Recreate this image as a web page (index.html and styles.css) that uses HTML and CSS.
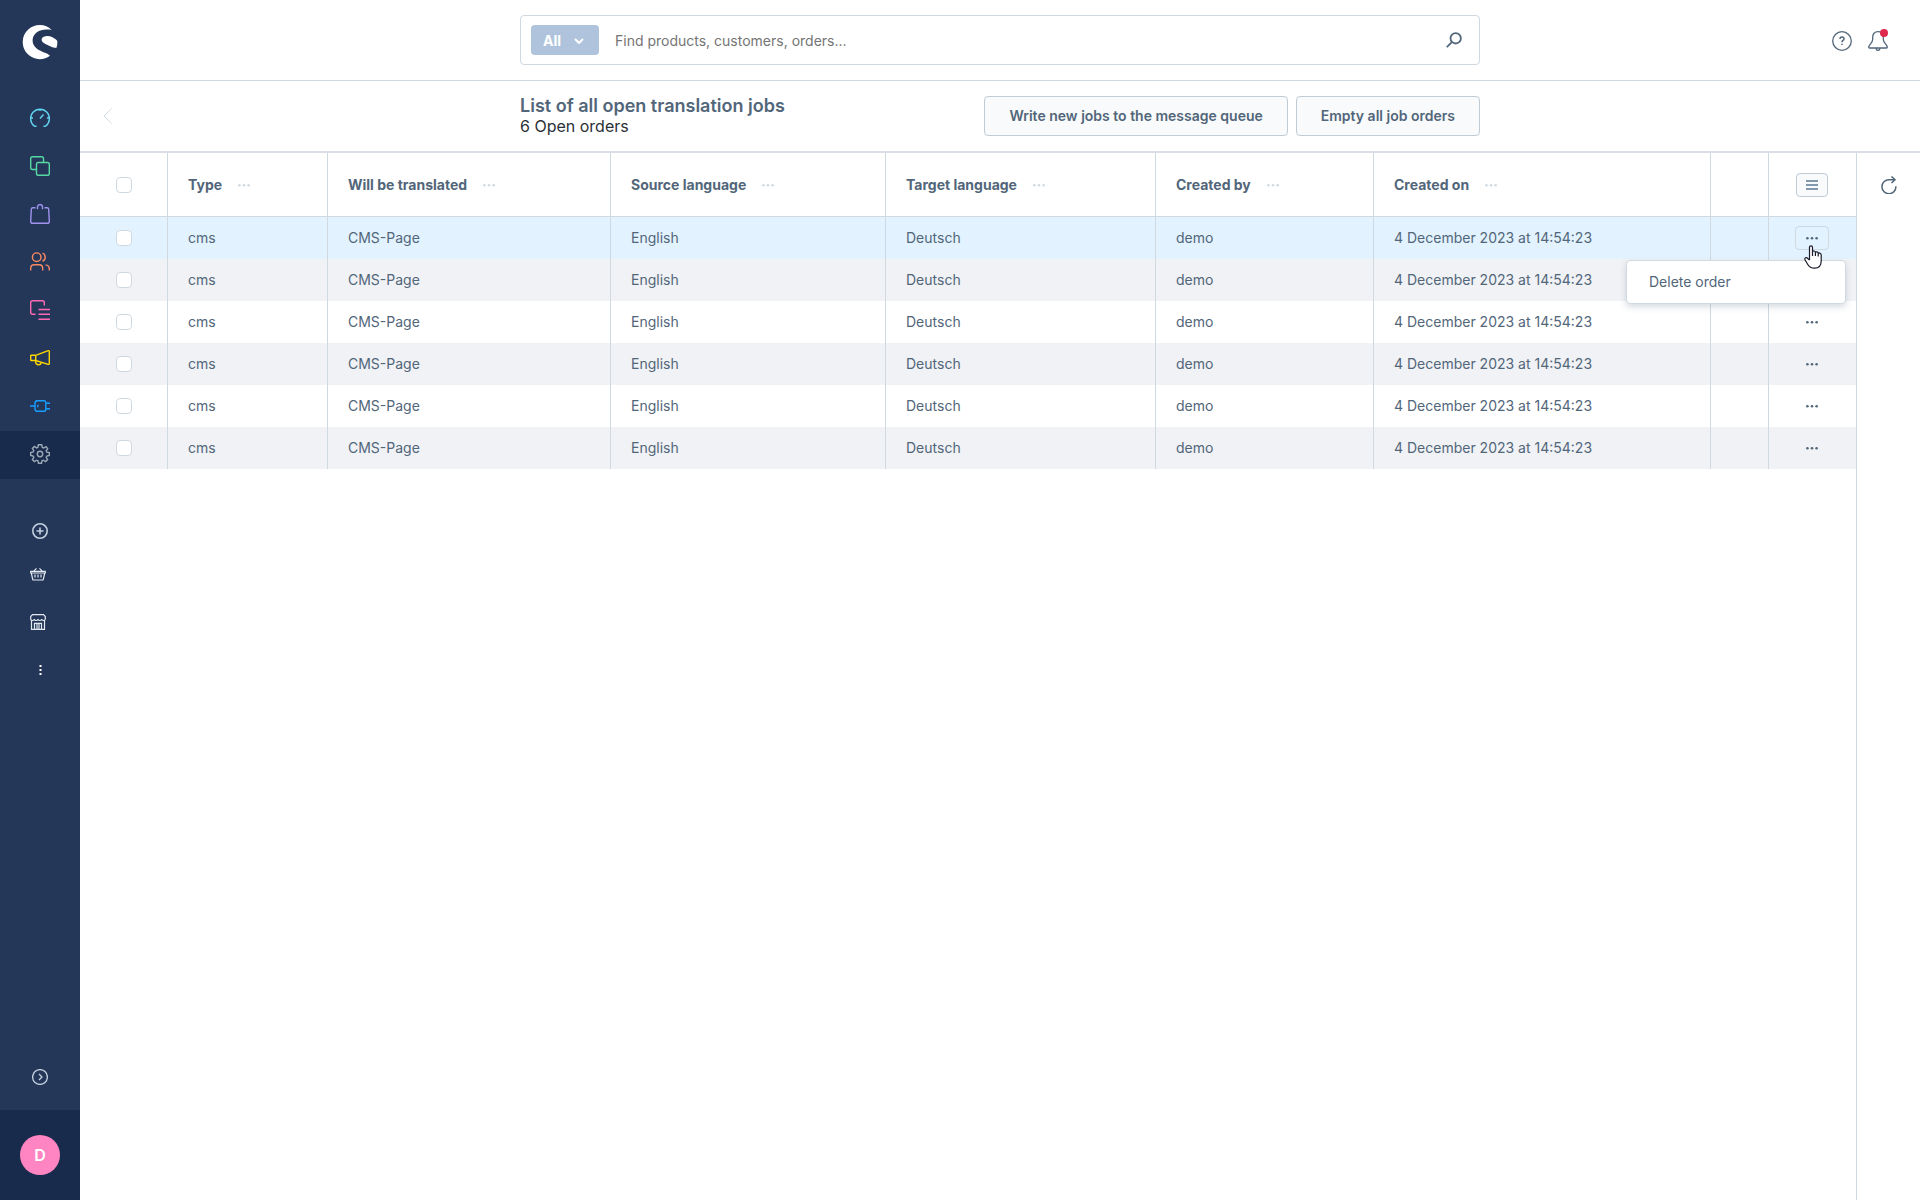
FILE: index.html
```html
<!DOCTYPE html>
<html lang="en">
<head>
<meta charset="utf-8">
<meta name="viewport" content="width=device-width, initial-scale=1">
<title>List of all open translation jobs</title>
<link rel="stylesheet" href="styles.css">
</head>
<body>
<svg class="sprite" aria-hidden="true">
  <symbol id="dots" viewBox="0 0 12 4"><circle cx="1.400" cy="2.200" r="1.300"/><circle cx="6" cy="2.200" r="1.300"/><circle cx="10.600" cy="2.200" r="1.300"/></symbol>
</svg>
<div class="app">
  <nav class="sidebar" aria-label="Main menu">
    <a class="logo" href="#" aria-label="Home">
      <svg viewBox="65 72 108 108" width="36" height="36" fill="#fff"><path d="M154 90A51 51 0 1 0 149 167C140 158 124 156 110 146C99 138 96 128 97 118C99 98 122 84 154 90Z"/><path d="M124 117C126 107 145 106 155 111Q169 118 171 124Q172 135 168 144Q155 142 146 137C136 132 122 127 124 117Z"/></svg>
    </a>
    <ul class="menu main-menu">
      <li><a class="menu-link dashboard" href="#" aria-label="Dashboard"><svg viewBox="0 0 20 20"><path d="M6.500 18.200H4.500A9.400 9.400 0 1 1 15.500 18.200H13.500M10 .8V3M.8 10H3M17 10H19.200M10 10.500L13.500 6.500"/></svg></a></li>
      <li><a class="menu-link catalogues" href="#" aria-label="Catalogues"><svg viewBox="0 0 20 20"><path d="M6.500 13.500H2.500Q.7 13.500 .7 11.700V2.500Q.7.7 2.500.7H11.700Q13.500.7 13.500 2.500V6.500"/><rect x="6.500" y="6.500" width="12.800" height="12.800" rx="1.800"/></svg></a></li>
      <li><a class="menu-link orders" href="#" aria-label="Orders"><svg viewBox="0 0 20 20"><path d="M5.500 3.700H2.800Q1.400 3.700 1.300 5.200L.7 17.200Q.7 19.300 2.500 19.300H17.500Q19.300 19.300 19.300 17.200L18.700 5.200Q18.600 3.700 17.200 3.700H14.500M7.500 5.200V3A2.500 2.500 0 0 1 12.500 3V5.200M7.500 3.700H8M12 3.700H12.500"/></svg></a></li>
      <li><a class="menu-link customers" href="#" aria-label="Customers"><svg viewBox="0 0 20 20"><circle cx="6.700" cy="5.200" r="4.300"/><path d="M.7 18.500V16.500Q.7 12.800 4.200 12.800H9.200Q12.700 12.800 12.700 16.500V18.500M12.500 1.200A4.300 4.300 0 0 1 12.500 9.200M15.500 12.900Q19.300 13.300 19.300 16.800V18.500"/></svg></a></li>
      <li><a class="menu-link content" href="#" aria-label="Content"><svg viewBox="0 0 20 20"><path d="M5.500 14.300H2.500Q.7 14.300 .7 12.500V2.500Q.7.7 2.500.7H12.500Q14.300.7 14.300 2.500V5.500M8.500 9.500H20M8.500 14.300H20M8.500 19.300H20"/></svg></a></li>
      <li><a class="menu-link marketing" href="#" aria-label="Marketing"><svg viewBox="0 0 20 20"><path d="M1.200 7.300H5.700L18.200 2.700Q19.300 2.300 19.300 3.500V15.500Q19.300 16.700 18.200 16.300L5.700 12.500H1.200Q.7 12.500 .7 12V7.800Q.7 7.300 1.200 7.300ZM5.700 7.300V12.500M5.500 12.500Q5.500 16.800 8.500 16.800Q11 16.800 11 14.200"/></svg></a></li>
      <li><a class="menu-link extensions" href="#" aria-label="Extensions"><svg viewBox="0 0 20 20"><path d="M0 10H5M7 4.700H14Q15.800 4.700 15.800 6.500V13.500Q15.800 15.300 14 15.300H7Q5 15 5 12.500V7.500Q5 5 7 4.700ZM16 7.300H20M16 12.700H20M7.800 8.800V11.200"/></svg></a></li>
      <li><a class="menu-link settings" href="#" aria-label="Settings" aria-current="page"><svg viewBox="0 0 20 20"><circle cx="10" cy="10" r="2.700"/><path d="M8.300.8H11.700L12.300 3.400L13.700 4L16 2.600L17.700 4.500L16.200 6.800L16.800 8.100L19.300 8.600V11.400L16.800 12L16.200 13.400L17.600 15.600L15.600 17.600L13.400 16.200L12 16.800L11.500 19.300H8.500L8 16.800L6.600 16.200L4.400 17.600L2.400 15.600L3.800 13.400L3.200 12L.7 11.400V8.600L3.200 8L3.800 6.600L2.400 4.400L4.400 2.500L6.600 3.900L7.900 3.300Z"/></svg></a></li>
    </ul>
    <ul class="menu shortcuts">
      <li><a class="menu-link" href="#" aria-label="Add sales channel"><svg class="small" viewBox="0 0 16 16"><circle cx="8" cy="8" r="7.200"/><path d="M8 4.500V11.500M4.500 8H11.500"/></svg></a></li>
      <li><a class="menu-link shifted" href="#" aria-label="Storefront"><svg class="small thin" viewBox="0 0 16 16"><path d="M.7 5.300H15.300V7H.7ZM1.300 7L2.700 13.300Q2.800 14 3.800 14H12.200Q13.200 14 13.300 13.300L14.700 7M3.500 5.300L6.500 2.300M12.500 5.300L9.500 2.300M5 8.500V11.500M8 8.500V11.500M11 8.500V11.500"/></svg></a></li>
      <li><a class="menu-link shifted" href="#" aria-label="Shop"><svg class="small thin" viewBox="0 0 16 16"><path d="M1.500 6.500V15.300H14.500V6.500M2.500.7H13.500L15.300 2.500V5Q15.300 6.500 13.500 6.500Q11.700 6.500 11.700 5Q11.700 6.500 9.800 6.500Q8 6.500 8 5Q8 6.500 6.200 6.500Q4.300 6.500 4.300 5Q4.300 6.500 2.500 6.500Q.7 6.500 .7 5V2.500ZM4.500 15V9.300H11.500V15M7 9.300V15M9 9.300V15"/></svg></a></li>
      <li><a class="menu-link" href="#" aria-label="More channels"><svg class="small solid" viewBox="0 0 16 16"><rect x="7.500" y="3" width="2" height="2"/><rect x="7.500" y="7" width="2" height="2"/><rect x="7.500" y="11" width="2" height="2"/></svg></a></li>
    </ul>
    <button class="expand" type="button" aria-label="Expand menu"><svg class="small" viewBox="0 0 16 16"><circle cx="8" cy="8" r="7.400"/><path d="M7 5L10 8L7 11"/></svg></button>
    <div class="user"><button class="avatar" type="button">D</button></div>
  </nav>

  <div class="page">
    <header class="topbar">
      <form class="search" role="search">
        <button class="scope" type="button">All
          <svg viewBox="0 0 10 6" width="10" height="6" aria-hidden="true"><path d="M1 1L5 5L9 1"/></svg>
        </button>
        <input class="search-input" type="search" placeholder="Find products, customers, orders..." aria-label="Search">
        <button class="icon-button" type="submit" aria-label="Search"><svg viewBox="0 0 16 16" width="16" height="16"><circle cx="9.700" cy="6.300" r="5.200" stroke-width="1.800"/><path d="M5.800 10.200L.8 15.200" stroke-width="1.800"/></svg></button>
      </form>
      <div class="top-actions">
        <button class="icon-button" type="button" aria-label="Help"><svg viewBox="0 0 20 20" width="20" height="20"><circle cx="10" cy="10" r="9.300"/><path d="M8 8Q8 6 10 6Q12 6 12 8Q12 9 10.800 9.500Q10 10 10 11.200M10 12.700V14" stroke-width="1.500"/></svg></button>
        <button class="icon-button bell" type="button" aria-label="Notifications"><svg viewBox="0 0 20 20" width="20" height="20"><path d="M10 .7C6.500.7 4.700 3 4.700 6V8.500C4.700 12 .7 13.500 .7 16.300Q.7 17 1.500 17H18.500Q19.300 17 19.300 16.300C19.300 13.500 15.300 12 15.300 8.500V6C15.300 3 13.500.7 10 .7ZM8 17.300Q8.300 19.300 10 19.300Q11.700 19.300 12 17.300"/></svg><span class="badge"></span></button>
      </div>
    </header>

    <div class="smart-bar">
      <a class="back" href="#" aria-label="Back"><svg viewBox="0 0 10 16" width="10" height="16"><path d="M8.700.5L1 8L8.700 15.500"/></svg></a>
      <div class="smart-content">
        <div class="headings">
          <h1 class="title">List of all open translation jobs</h1>
          <p class="subtitle">6 Open orders</p>
        </div>
        <button class="button" type="button">Write new jobs to the message queue</button>
        <button class="button" type="button">Empty all job orders</button>
      </div>
    </div>

    <div class="body">
      <main class="listing">
        <table class="grid">
          <colgroup><col class="c-check"><col class="c-type"><col class="c-item"><col class="c-source"><col class="c-target"><col class="c-by"><col><col class="c-gap"><col class="c-actions"></colgroup>
          <thead>
            <tr>
              <th class="check"><input class="box" type="checkbox" aria-label="Select all"></th>
              <th><div class="head">Type<svg class="dots"><use href="#dots"/></svg></div></th>
              <th><div class="head">Will be translated<svg class="dots"><use href="#dots"/></svg></div></th>
              <th><div class="head">Source language<svg class="dots"><use href="#dots"/></svg></div></th>
              <th><div class="head">Target language<svg class="dots"><use href="#dots"/></svg></div></th>
              <th><div class="head">Created by<svg class="dots"><use href="#dots"/></svg></div></th>
              <th><div class="head">Created on<svg class="dots"><use href="#dots"/></svg></div></th>
              <th></th>
              <th class="actions"><button class="columns" type="button" aria-label="Table settings"><svg viewBox="0 0 12 10" width="12" height="10"><path d="M0 1H12M0 5H12M0 9H12"/></svg></button></th>
            </tr>
          </thead>
          <tbody>
            <tr class="hovered">
              <td class="check"><input class="box" type="checkbox" aria-label="Select row 1"></td><td>cms</td><td>CMS-Page</td><td>English</td><td>Deutsch</td><td>demo</td><td>4 December 2023 at 14:54:23</td><td></td>
              <td class="actions"><button class="more open" type="button" aria-label="Row actions" aria-expanded="true"><svg class="dots"><use href="#dots"/></svg></button>
                <div class="context-menu" role="menu"><button class="context-item" type="button" role="menuitem">Delete order</button></div>
                <svg class="pointer" viewBox="0 0 18 24" width="18" height="24" aria-hidden="true"><path d="M5.500 15V2.500Q5.500 .8 7 .8Q8.500 .8 8.500 2.500V7Q8.700 5.800 10 6Q11.400 6.200 11.400 7.500Q11.700 6.600 13 6.900Q14.200 7.200 14.200 8.500Q14.600 7.700 15.800 8.100Q17.200 8.500 17.200 10V16Q17.200 23.200 10.500 23.200Q6 23.200 3.800 19.500L1 14.800Q.5 13.300 1.500 12.800Q2.700 12.300 3.800 13.500L5.500 15M8.500 7V11M11.400 7.500V11M14.200 8.500V11.500"/></svg>
              </td>
            </tr>
            <tr><td class="check"><input class="box" type="checkbox" aria-label="Select row 2"></td><td>cms</td><td>CMS-Page</td><td>English</td><td>Deutsch</td><td>demo</td><td>4 December 2023 at 14:54:23</td><td></td><td class="actions"><button class="more" type="button" aria-label="Row actions"><svg class="dots"><use href="#dots"/></svg></button></td></tr>
            <tr><td class="check"><input class="box" type="checkbox" aria-label="Select row 3"></td><td>cms</td><td>CMS-Page</td><td>English</td><td>Deutsch</td><td>demo</td><td>4 December 2023 at 14:54:23</td><td></td><td class="actions"><button class="more" type="button" aria-label="Row actions"><svg class="dots"><use href="#dots"/></svg></button></td></tr>
            <tr><td class="check"><input class="box" type="checkbox" aria-label="Select row 4"></td><td>cms</td><td>CMS-Page</td><td>English</td><td>Deutsch</td><td>demo</td><td>4 December 2023 at 14:54:23</td><td></td><td class="actions"><button class="more" type="button" aria-label="Row actions"><svg class="dots"><use href="#dots"/></svg></button></td></tr>
            <tr><td class="check"><input class="box" type="checkbox" aria-label="Select row 5"></td><td>cms</td><td>CMS-Page</td><td>English</td><td>Deutsch</td><td>demo</td><td>4 December 2023 at 14:54:23</td><td></td><td class="actions"><button class="more" type="button" aria-label="Row actions"><svg class="dots"><use href="#dots"/></svg></button></td></tr>
            <tr><td class="check"><input class="box" type="checkbox" aria-label="Select row 6"></td><td>cms</td><td>CMS-Page</td><td>English</td><td>Deutsch</td><td>demo</td><td>4 December 2023 at 14:54:23</td><td></td><td class="actions"><button class="more" type="button" aria-label="Row actions"><svg class="dots"><use href="#dots"/></svg></button></td></tr>
          </tbody>
        </table>
      </main>
      <aside class="tools">
        <button class="icon-button" type="button" aria-label="Refresh"><svg viewBox="0 0 16 18" width="16" height="18"><path d="M14.900 10.300A7 7 0 1 1 8 3.700H14M10.500.5L14 3.700L10.500 7" stroke-width="1.500"/></svg></button>
      </aside>
    </div>
  </div>
</div>
</body>
</html>
```
FILE: styles.css
```css
* { box-sizing: border-box; }

body {
  margin: 0;
  background: #fff;
  color: #52667a;
  font: 14px/20px Inter, "Liberation Sans", sans-serif;
}

button { font: inherit; color: inherit; padding: 0; border: 0; background: none; }
ul { margin: 0; padding: 0; list-style: none; }
svg { display: block; fill: none; stroke: currentColor; }
.sprite { position: absolute; width: 0; height: 0; }

.app { display: flex; min-height: 100vh; }

/* Sidebar */
.sidebar {
  display: flex;
  flex-direction: column;
  flex: 0 0 80px;
  background: #243758;
}
.logo { display: flex; justify-content: center; padding: 24px 0 35px; }
.logo svg { stroke: none; fill: #fff; }
.menu-link {
  display: flex;
  align-items: center;
  justify-content: center;
  height: 48px;
  color: #c3d0e0;
}
.main-menu .menu-link { padding-bottom: 2px; }
.menu-link svg { width: 20px; height: 20px; stroke-width: 1.4; }
.menu-link .small, .expand .small { width: 16px; height: 16px; stroke-width: 1.6; }
.menu-link .thin { stroke-width: 1.2; }
.menu-link .solid { fill: #fff; stroke: none; }
.dashboard { color: #61d5f0; }
.catalogues { color: #57d9a3; }
.orders { color: #a092f0; }
.customers { color: #f88962; }
.content { color: #ff68b4; }
.marketing { color: #ffd700; }
.extensions { color: #189eff; }
.settings { color: #9aa8b5; background: #182b4d; }
.shortcuts { padding-top: 28px; }
.shortcuts li:first-child { margin-bottom: -5px; }
.shifted { padding-right: 4px; color: #e3e9f1; }
.expand {
  display: flex;
  justify-content: center;
  margin-top: auto;
  padding: 24px 0 25px;
  color: #c3d0e0;
}
.expand .small { stroke-width: 1.3; }
.user { display: flex; justify-content: center; padding: 25px 0; background: #182b4d; }
.avatar {
  width: 40px;
  height: 40px;
  border-radius: 50%;
  background: #ff85c2;
  color: #fff;
  font-size: 16px;
  font-weight: 600;
}

/* Top area */
.page { display: flex; flex-direction: column; flex: 1; min-width: 0; }
.topbar, .smart-bar {
  display: grid;
  grid-template-columns: 1fr minmax(0, 960px) 1fr;
  align-items: center;
}
.topbar { padding: 15px 0; border-bottom: 1px solid #d1d9e0; }
.search {
  grid-column: 2;
  display: flex;
  align-items: center;
  height: 50px;
  padding: 0 17px 0 10px;
  border: 1px solid #d1d9e0;
  border-radius: 4px;
}
.scope {
  display: flex;
  align-items: center;
  justify-content: space-between;
  width: 68px;
  height: 30px;
  padding: 2px 15px 0 12px;
  border-radius: 4px;
  background: #afc4dc;
  color: #fff;
  font-weight: 700;
}
.scope svg { stroke-width: 2; }
.search-input {
  flex: 1;
  min-width: 0;
  height: 30px;
  padding: 0 16px;
  border: 0;
  outline: 0;
  font: inherit;
}
.search-input::placeholder { color: #757575; }
.top-actions { display: flex; justify-content: flex-end; gap: 16px; padding: 2px 32px 0 0; }
.icon-button { position: relative; color: #52667a; }
.icon-button svg { stroke-width: 1.3; }
.badge {
  position: absolute;
  top: -2px;
  right: 0;
  width: 8px;
  height: 8px;
  border-radius: 50%;
  background: #de294c;
}
.smart-bar { padding: 15px 0; border-bottom: 2px solid #d8dde6; }
.back { padding-left: 23px; color: #d1d9e0; }
.smart-content { display: flex; align-items: center; gap: 8px; }
.headings { flex: 1; }
.title { margin: 0; font-size: 18px; line-height: 20px; font-weight: 600; }
.subtitle { margin: 0; color: #2b3136; font-size: 16px; line-height: 20px; }
.button {
  height: 40px;
  padding: 0 24px;
  border: 1px solid #c2ccd6;
  border-radius: 4px;
  background: #f9fafb;
  font-weight: 600;
}

/* Listing */
.body { display: flex; flex: 1; }
.listing { flex: 1; min-width: 0; }
.grid { width: 100%; border-collapse: separate; border-spacing: 0; table-layout: fixed; }
.c-check { width: 88px; }
.c-type { width: 160px; }
.c-item { width: 283px; }
.c-source { width: 275px; }
.c-target { width: 270px; }
.c-by { width: 218px; }
.c-gap { width: 58px; }
.c-actions { width: 87px; }
.grid th, .grid td {
  padding: 0 0 0 20px;
  border-right: 1px solid #d1d9e0;
  text-align: left;
  white-space: nowrap;
}
.grid th:last-child, .grid td:last-child { border-right: 0; }
.grid th { height: 64px; border-bottom: 1px solid #d1d9e0; font-weight: 700; }
.grid td { height: 42px; }
.grid tbody tr:nth-child(even) { background: #f0f2f5; }
.grid .hovered { background: #e2f3ff; }
.head { display: flex; align-items: center; gap: 16px; }
.dots { width: 12px; height: 4px; fill: #52667a; stroke: none; }
.head .dots { fill: #d1d9e0; }
.grid .check { padding-left: 36px; }
.box {
  display: block;
  appearance: none;
  width: 16px;
  height: 16px;
  margin: 0;
  border: 1px solid #d1d9e0;
  border-radius: 4px;
  background: #fff;
}
.grid .actions { position: relative; padding: 0 2px 0 0; }
.columns, .more {
  display: flex;
  align-items: center;
  justify-content: center;
  width: 34px;
  height: 24px;
  margin: 0 auto;
  border: 1px solid transparent;
  border-radius: 4px;
}
.columns { width: 32px; border-color: #c2ccd6; background: #f9fafb; color: #8298ad; }
.columns svg { stroke-width: 2; }
.open { border-color: #d1d9e0; }
.context-menu {
  position: absolute;
  z-index: 1;
  top: 43px;
  right: 10px;
  width: 220px;
  border: 1px solid #d1d9e0;
  border-radius: 4px;
  background: #fff;
  box-shadow: 0 3px 6px rgba(120, 138, 155, 0.3);
}
.context-item { display: block; width: 100%; height: 42px; padding: 0 22px; text-align: left; }
.pointer { position: absolute; z-index: 2; top: 28px; right: 34px; fill: #fff; stroke: #1b1b2b; stroke-width: 1.2; }
.tools {
  display: flex;
  justify-content: center;
  align-items: flex-start;
  flex: 0 0 64px;
  padding-top: 23px;
  border-left: 1px solid #d1d9e0;
}
```
